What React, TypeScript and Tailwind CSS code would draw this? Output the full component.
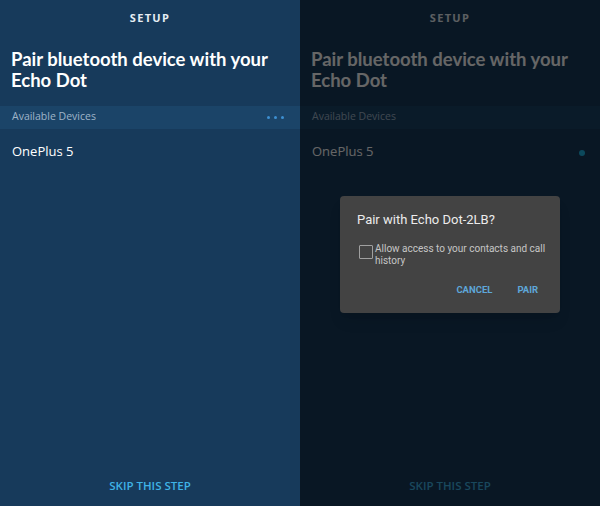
import React from "react";

const font = { fontFamily: '"Open Sans", "Noto Sans", sans-serif' };

function SetupScreen({ dimmed }: { dimmed?: boolean }) {
  return (
    <div className="relative flex h-[506px] w-[300px] flex-col bg-[#173a5b] text-white">
      <div className="pt-[10px] text-center text-[11px] font-bold tracking-[0.12em] text-[#e6edf3]">
        SETUP
      </div>
      <h1
        className="mt-[22px] px-[11px] text-[18.5px] font-bold leading-[21px]"
        style={{ fontFamily: "Lato, sans-serif" }}
      >
        Pair bluetooth device with your Echo Dot
      </h1>
      <div className="mt-[15px] flex h-[23px] items-center justify-between bg-[#1b4468] pl-[12px] pr-[16px]">
        <span className="text-[10.5px] text-[#9fb4c8]">Available Devices</span>
        {!dimmed && (
          <div className="flex gap-[4px]">
            <span className="h-[3px] w-[3px] rounded-full bg-[#3d8fd1]" />
            <span className="h-[3px] w-[3px] rounded-full bg-[#3d8fd1]" />
            <span className="h-[3px] w-[3px] rounded-full bg-[#3d8fd1]" />
          </div>
        )}
      </div>
      <div className="flex h-[46px] items-center justify-between pl-[12px] pr-[15px]">
        <span className="text-[13px]">OnePlus 5</span>
        {dimmed && <span className="mt-[2px] h-[6px] w-[6px] rounded-full bg-[#1fb6e6]" />}
      </div>
      <div className="mt-auto pb-[12px] text-center text-[11.5px] font-semibold text-[#3fb3e6]">
        SKIP THIS STEP
      </div>
      {dimmed && <div className="absolute inset-0 bg-[#000000]/60" />}
    </div>
  );
}

export default function App() {
  return (
    <div className="flex h-[506px] w-[600px] overflow-hidden" style={font}>
      <SetupScreen />
      <div className="relative">
        <SetupScreen dimmed />
        <div className="absolute left-[40px] top-[196px] w-[220px] rounded-[4px] bg-[#434343] pb-[16px] pl-[17px] pr-[8px] pt-[14px] shadow-lg">
          <div className="text-[13px] text-[#ececec]" style={{ fontFamily: "Roboto, sans-serif" }}>
            Pair with Echo Dot-2LB?
          </div>
          <label className="mt-[13px] flex items-start gap-[2px] pl-[2px]">
            <span className="mt-[2px] h-[14px] w-[14px] shrink-0 rounded-[1px] border-[1.5px] border-[#a0a0a0]" />
            <span className="text-[10px] leading-[12px] text-[#c6c6c6]" style={{ fontFamily: "Roboto, sans-serif" }}>
              Allow access to your contacts and call history
            </span>
          </label>
          <div className="mt-[16px] flex justify-end gap-[25px] pr-[14px] text-[9.5px] font-bold text-[#5ea7d9]" style={{ fontFamily: "Roboto, sans-serif" }}>
            <span>CANCEL</span>
            <span>PAIR</span>
          </div>
        </div>
      </div>
    </div>
  );
}
